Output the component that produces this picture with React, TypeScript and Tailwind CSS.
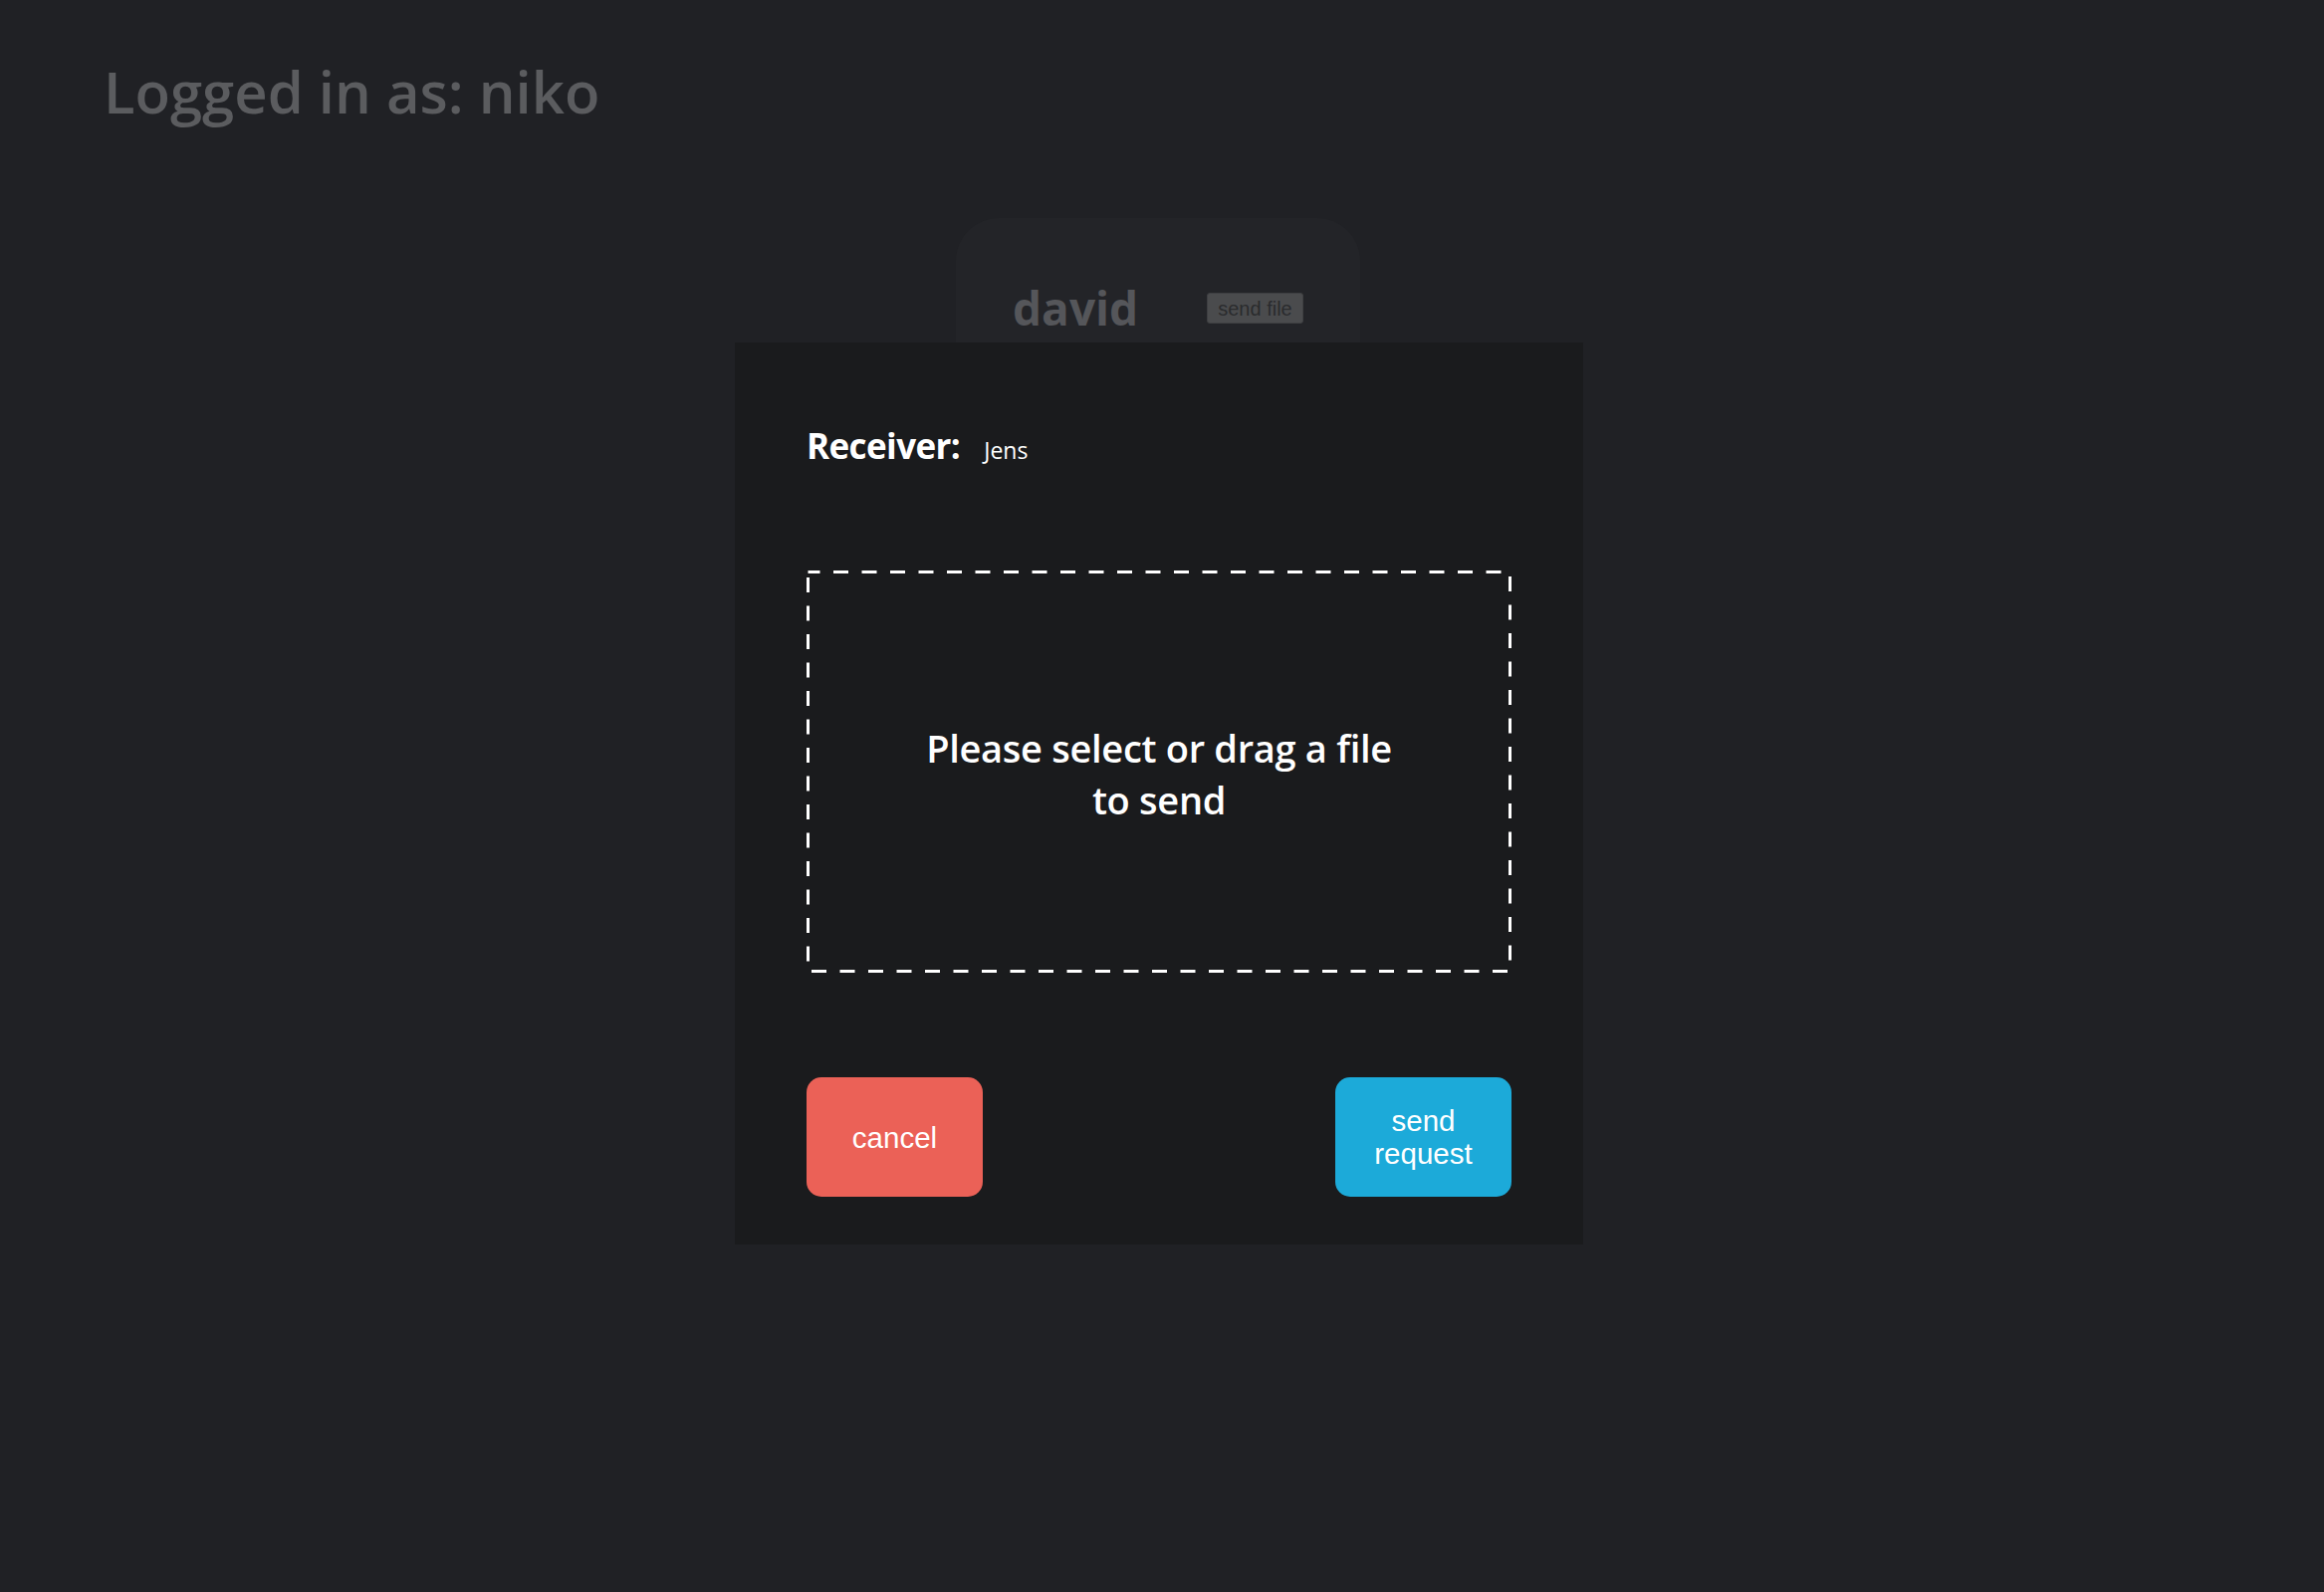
import React from "react";

const sans = "font-['Open_Sans','Noto_Sans',sans-serif]";
const arial = "font-['Liberation_Sans',Arial,sans-serif]";

export default function App() {
  return (
    <div className={`relative min-h-screen w-full overflow-hidden bg-[#202125] ${sans}`}>
      <h1 className="pl-[104px] pt-[63px] text-[58px] font-semibold leading-none text-[#5b5c5f]">
        Logged in as: niko
      </h1>

      <div className="mt-[98px] flex justify-center pr-[8px]">
        <div className="flex h-[420px] w-[406px] items-start justify-between rounded-[43px] bg-[#232428] pl-[57px] pr-[57px] pt-[67px]">
          <span className="text-[46px] font-bold leading-none text-[#55565a]">david</span>
          <button
            className={`mt-[8px] flex h-[31px] w-[97px] items-center justify-center rounded-[3px] border border-[#3e3f42] bg-[#4a4b4d] text-[20px] leading-none text-[#2a2b2e] ${arial}`}
          >
            send file
          </button>
        </div>
      </div>

      <div className="fixed inset-0 flex items-center justify-center pb-[5px] pr-[6px]">
        <div className="flex w-[852px] flex-col bg-[#1a1b1d] px-[72px] pb-[48px] pt-[86px]">
          <div className="flex items-baseline gap-[24px] text-white">
            <span className="text-[35px] font-bold leading-none tracking-[-0.6px]">Receiver:</span>
            <span className="text-[23px] leading-none">Jens</span>
          </div>

          <div className="relative mt-[108px] flex h-[404px] w-[708px] items-center justify-center">
            <svg
              className="absolute inset-0"
              width="708"
              height="404"
              viewBox="0 0 708 404"
              fill="none"
            >
              <rect
                x="1.5"
                y="1.5"
                width="705"
                height="401"
                stroke="#ffffff"
                strokeWidth="3"
                strokeDasharray="15 13.5"
                strokeDashoffset="3"
              />
            </svg>
            <p className="pt-[4px] text-center text-[38px] font-semibold leading-[52px] tracking-[-0.3px] text-white">
              Please select or drag a file
              <br />
              to send
            </p>
          </div>

          <div className="mt-[105px] flex justify-between">
            <button
              className={`flex h-[120px] w-[177px] items-center justify-center rounded-[15px] bg-[#eb6157] px-5 text-[29.5px] leading-[33px] text-white ${arial}`}
            >
              cancel
            </button>
            <button
              className={`flex h-[120px] w-[177px] items-center justify-center rounded-[15px] bg-[#1caad9] px-5 text-[29.5px] leading-[33px] text-white ${arial}`}
            >
              send request
            </button>
          </div>
        </div>
      </div>
    </div>
  );
}
